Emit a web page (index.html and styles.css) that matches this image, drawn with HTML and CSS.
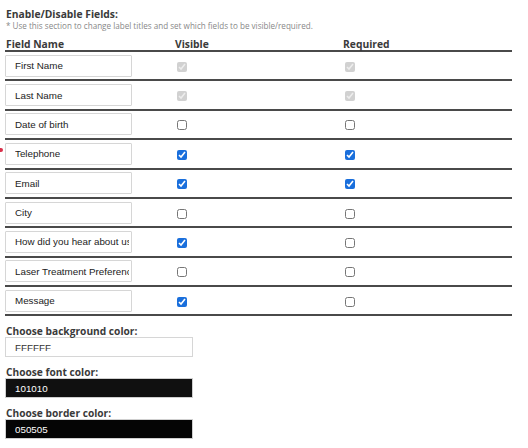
FILE: index.html
```html
<!DOCTYPE html>
<html>
<head>
<meta charset="utf-8">
<link rel="stylesheet" href="styles.css">
</head>
<body>
<div class="page">
  <span class="marker"></span>
  <div class="title">Enable/Disable Fields:</div>
  <div class="hint">* Use this section to change label titles and set which fields to be visible/required.</div>
  <table class="fields">
    <thead>
      <tr><th class="c-name">Field Name</th><th class="c-vis">Visible</th><th class="c-req">Required</th></tr>
    </thead>
    <tbody>
      <tr><td><input class="txt" value="First Name"></td><td><input type="checkbox" checked disabled></td><td><input type="checkbox" checked disabled></td></tr>
      <tr><td><input class="txt" value="Last Name"></td><td><input type="checkbox" checked disabled></td><td><input type="checkbox" checked disabled></td></tr>
      <tr><td><input class="txt" value="Date of birth"></td><td><input type="checkbox"></td><td><input type="checkbox"></td></tr>
      <tr><td><input class="txt" value="Telephone"></td><td><input type="checkbox" checked></td><td><input type="checkbox" checked></td></tr>
      <tr><td><input class="txt" value="Email"></td><td><input type="checkbox" checked></td><td><input type="checkbox" checked></td></tr>
      <tr><td><input class="txt" value="City"></td><td><input type="checkbox"></td><td><input type="checkbox"></td></tr>
      <tr><td><input class="txt" value="How did you hear about us"></td><td><input type="checkbox" checked></td><td><input type="checkbox"></td></tr>
      <tr><td><input class="txt" value="Laser Treatment Preference"></td><td><input type="checkbox"></td><td><input type="checkbox"></td></tr>
      <tr><td><input class="txt" value="Message"></td><td><input type="checkbox" checked></td><td><input type="checkbox"></td></tr>
    </tbody>
  </table>
  <div class="colors">
    <div class="color-block">
      <div class="clabel">Choose background color:</div>
      <input class="cinput bg-white" value="FFFFFF">
    </div>
    <div class="color-block">
      <div class="clabel">Choose font color:</div>
      <input class="cinput bg-dark1" value="101010">
    </div>
    <div class="color-block">
      <div class="clabel">Choose border color:</div>
      <input class="cinput bg-dark2" value="050505">
    </div>
  </div>
</div>
</body>
</html>
```

FILE: styles.css
```css
html, body {
  margin: 0;
  padding: 0;
  background: #ffffff;
}
.page {
  position: relative;
  width: 528px;
  height: 448px;
  padding: 8px 0 0 5px;
  box-sizing: border-box;
  font-family: "Open Sans", "Liberation Sans", sans-serif;
  color: #333;
}
.marker {
  position: absolute;
  left: 0;
  top: 148px;
  width: 3px;
  height: 4px;
  border-radius: 0 2px 2px 0;
  background: #d9304a;
}
.title {
  font-weight: 700;
  font-size: 10.3px;
  line-height: 13px;
  color: #3a3a3a;
  padding-left: 1px;
}
.hint {
  font-size: 8.1px;
  line-height: 10px;
  color: #888;
  padding-left: 1px;
}
.fields {
  border-collapse: collapse;
  width: 507px;
  margin-top: 7px;
}
.fields th {
  text-align: left;
  font-weight: 700;
  font-size: 10.3px;
  line-height: 12px;
  color: #3a3a3a;
  padding: 0;
  border-bottom: 2px solid #4a4a4a;
  height: 12px;
}
.c-name { width: 169px; padding-left: 1px !important; }
.c-vis { width: 168px; }
.fields td {
  border-bottom: 2px solid #4a4a4a;
  padding: 2.7px 0;
  vertical-align: top;
  height: 22px;
}
.txt {
  display: block;
  box-sizing: border-box;
  width: 127px;
  height: 22px;
  margin: 0;
  padding: 0 2px 0 9px;
  border: 1px solid #d6d6d6;
  border-radius: 1px;
  font-family: "Liberation Sans", Arial, sans-serif;
  font-size: 9.8px;
  color: #222;
  background: #fff;
  outline: none;
}
.fields td input[type="checkbox"] {
  width: 10px;
  height: 10px;
  margin: 3px 0 0 2px;
  accent-color: #1a6fdc;
}
.colors {
  margin-top: 10px;
}
.color-block {
  margin-bottom: 10px;
}
.clabel {
  font-weight: 700;
  font-size: 10.2px;
  line-height: 10px;
  color: #3a3a3a;
  padding-left: 1px;
  margin-bottom: 1px;
}
.cinput {
  display: block;
  box-sizing: border-box;
  width: 188px;
  height: 20px;
  margin: 0;
  padding: 0 2px 0 9px;
  border: 1px solid #d6d6d6;
  font-family: "Liberation Sans", Arial, sans-serif;
  font-size: 9.8px;
  outline: none;
}
.bg-white { background: #fff; color: #333; }
.bg-dark1 { background: #101010; color: #fff; border-color: #cfcfcf; }
.bg-dark2 { background: #050505; color: #fff; border-color: #cfcfcf; }
```
